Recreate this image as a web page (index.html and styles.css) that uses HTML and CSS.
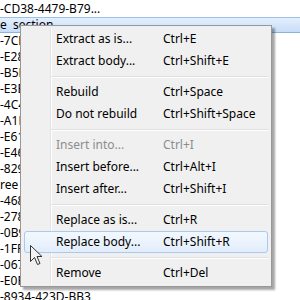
FILE: index.html
```html
<!DOCTYPE html>
<html lang="en">
<head>
    <meta charset="UTF-8">
    <meta name="viewport" content="width=device-width, initial-scale=1.0">
    <title>Section menu</title>
    <link rel="stylesheet" href="styles.css">
</head>
<body>
    <div class="list">
        <div class="row">-CD38-4479-B79...</div>
        <div class="row selected">e&nbsp;&nbsp;section</div>
        <div class="row">-7CE</div>
        <div class="row">-E28</div>
        <div class="row">-B5E</div>
        <div class="row">-E3E</div>
        <div class="row">-4C4</div>
        <div class="row">-A1D</div>
        <div class="row">-E61</div>
        <div class="row">-E46</div>
        <div class="row">-829</div>
        <div class="row">ree</div>
        <div class="row">-468</div>
        <div class="row">-278</div>
        <div class="row">-0B9</div>
        <div class="row">-1FF</div>
        <div class="row">-067</div>
        <div class="row">-E0F</div>
        <div class="row">-8934-423D-BB3</div>
    </div>

    <div class="menu">
        <div class="item"><span class="label">Extract as is...</span><span class="key">Ctrl+E</span></div>
        <div class="item"><span class="label">Extract body...</span><span class="key">Ctrl+Shift+E</span></div>
        <div class="sep"></div>
        <div class="item"><span class="label">Rebuild</span><span class="key">Ctrl+Space</span></div>
        <div class="item"><span class="label">Do not rebuild</span><span class="key">Ctrl+Shift+Space</span></div>
        <div class="sep"></div>
        <div class="item disabled"><span class="label">Insert into...</span><span class="key">Ctrl+I</span></div>
        <div class="item"><span class="label">Insert before...</span><span class="key">Ctrl+Alt+I</span></div>
        <div class="item"><span class="label">Insert after...</span><span class="key">Ctrl+Shift+I</span></div>
        <div class="sep"></div>
        <div class="item"><span class="label">Replace as is...</span><span class="key">Ctrl+R</span></div>
        <div class="item hover"><span class="label">Replace body...</span><span class="key">Ctrl+Shift+R</span></div>
        <div class="sep"></div>
        <div class="item"><span class="label">Remove</span><span class="key">Ctrl+Del</span></div>
    </div>

    <svg class="cursor" width="14" height="21" viewBox="0 0 14 21">
        <path d="M0.5 0.5 L0.5 16.5 L4.5 12.5 L7.5 19.5 L10 18.5 L7 11.5 L12 11.5 Z" fill="#f4f4f4" stroke="#333" stroke-width="1"/>
    </svg>
</body>
</html>
```

FILE: styles.css
```css
body {
    margin: 0;
    background-color: #fff;
    font-family: "Noto Sans", sans-serif;
    font-size: 12px;
    color: #000;
    overflow: hidden;
    width: 300px;
    height: 300px;
}
.list {
    padding-top: 1px;
}
.row {
    height: 16px;
    line-height: 16px;
    white-space: nowrap;
    box-sizing: border-box;
}
.row.selected {
    background: linear-gradient(#e4effd, #c7ddf8);
    border-top: 1px solid #9ebfe6;
    border-bottom: 1px solid #8db2e0;
    line-height: 14px;
}
.menu {
    position: absolute;
    left: 20px;
    top: 25px;
    width: 252px;
    box-sizing: border-box;
    padding: 2px 0;
    background-color: #f0f0f0;
    border: 1px solid #979797;
    box-shadow: 3px 3px 2px rgba(0, 0, 0, 0.35);
}
.menu::before {
    content: "";
    position: absolute;
    top: 2px;
    bottom: 2px;
    left: 29px;
    width: 1px;
    background-color: #e2e3e3;
    border-right: 1px solid #fff;
}
.item {
    position: relative;
    display: grid;
    grid-template-columns: 107px 1fr;
    height: 22px;
    line-height: 20px;
    margin: 0 3px;
    padding-left: 31px;
    border: 1px solid transparent;
    border-radius: 3px;
    box-sizing: border-box;
    white-space: nowrap;
}
.item.disabled {
    color: #8d8d8d;
}
.item.hover {
    border-color: #a9caf0;
    background: linear-gradient(#f3f8fe, #e2edfb);
}
.sep {
    position: relative;
    height: 9px;
    margin: 0 3px 0 30px;
    padding-top: 4px;
    box-sizing: border-box;
}
.sep::after {
    content: "";
    display: block;
    height: 1px;
    background-color: #e0e0e0;
    border-bottom: 1px solid #fff;
}
.cursor {
    position: absolute;
    left: 30px;
    top: 245px;
}
```
